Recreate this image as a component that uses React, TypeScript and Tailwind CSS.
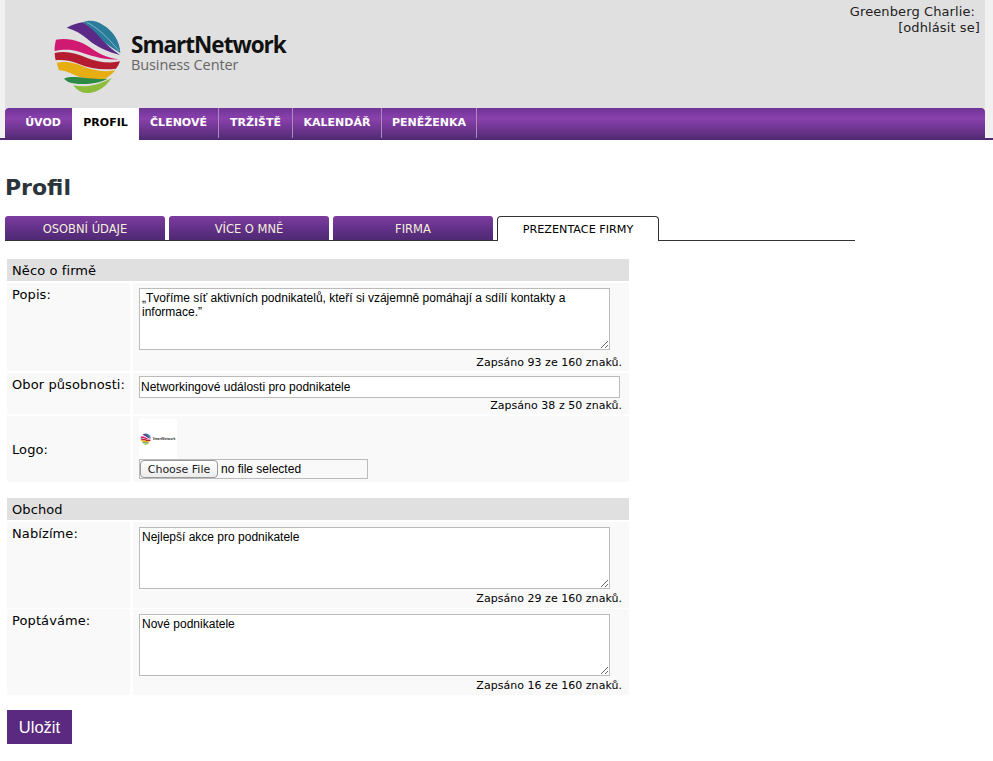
import React from "react";

function Globe({ size }: { size: number }) {
  return (
    <svg width={size} height={size} viewBox="30 20 234 234" className="shrink-0">
      <path d="M128 36C145 28 170 30 190 45C220 62 240 95 241 128C205 105 175 85 158 62C148 50 138 42 128 36Z" fill="#2b7b9b" />
      <path d="M140 36C175 52 205 85 238 122" stroke="#9fd8dc" strokeWidth="2" fill="none" />
      <path d="M80 52C95 44 112 38 128 36C150 48 170 70 190 92C205 108 222 122 240 134C205 125 170 110 145 88C125 70 103 58 80 52Z" fill="#5b2a86" />
      <path d="M48 88C90 80 130 95 160 118C190 138 215 145 240 147C190 150 150 135 120 125C90 115 65 118 44 122C43 112 45 100 48 88Z" fill="#d01a72" />
      <path d="M44 128C80 120 110 130 140 142C170 155 210 160 240 153C236 164 232 170 228 175C190 180 150 175 115 160C90 150 65 148 47 150C45 142 44 135 44 128Z" fill="#b51c30" />
      <path d="M50 157C85 150 110 160 140 172C170 182 200 185 226 180C216 192 205 200 195 205C160 212 130 205 105 195C85 185 70 180 57 180C54 172 52 165 50 157Z" fill="#e6ae12" />
      <path d="M72 205C105 192 140 210 203 205C175 222 115 226 85 215C80 212 76 209 72 205Z" fill="#2c8a45" />
      <path d="M100 225C130 232 170 228 215 202C195 235 165 248 140 248C125 248 110 240 100 225Z" fill="#8cbc3a" />
    </svg>
  );
}

function Counter({ children, className = "" }: { children: React.ReactNode; className?: string }) {
  return <div className={"text-right pr-[7px] text-[11px] leading-[13px] tracking-[0.03px] text-black " + className}>{children}</div>;
}

function Row({ label, h, center, children }: { label: string; h: string; center?: boolean; children: React.ReactNode }) {
  return (
    <div className={"flex gap-[3px] " + h}>
      <div className={"w-[123px] bg-[#f9f9f9] pl-[5px] text-[13px] leading-[16px] tracking-[0.1px] " + (center ? "flex items-center pt-[1px]" : "pt-[4px]")}>{label}</div>
      <div className="flex-1 bg-[#f9f9f9] pl-[6px]">{children}</div>
    </div>
  );
}

function Area({ value }: { value: string }) {
  return (
    <textarea
      defaultValue={value}
      className="block w-[471px] h-[62px] border border-[#bbbbbb] bg-white px-[2px] py-[2px] text-[12px] leading-[14px] text-black [font-family:'Liberation_Sans',Arial,sans-serif]"
    />
  );
}

function Heading({ children }: { children: React.ReactNode }) {
  return <div className="h-[22px] bg-[#e0e0e0] pl-[5px] text-[13px] leading-[23px] tracking-[0.1px]">{children}</div>;
}

const navItems = ["ÚVOD", "PROFIL", "ČLENOVÉ", "TRŽIŠTĚ", "KALENDÁŘ", "PENĚŽENKA"];
const tabs = ["OSOBNÍ ÚDAJE", "VÍCE O MNĚ", "FIRMA"];

export default function App() {
  return (
    <div className="min-h-[761px] bg-white text-black [font-family:'DejaVu_Sans',Verdana,sans-serif]">
      <header className="bg-[#f1f1f1] pl-[5px] pr-[8px] border-b-2 border-[#4f2a73] h-[140px]">
        <div className="relative h-[108px] bg-[#e0e0e0]">
          <div className="flex items-start pl-[45px] pt-[17px]">
            <Globe size={78} />
            <div className="ml-[3px] mt-[15px] [font-family:'Open_Sans',sans-serif]">
              <div className="text-[22.5px] leading-[26px] font-bold tracking-[-1px] text-[#111]">SmartNetwork</div>
              <div className="text-[14.5px] leading-[14px] tracking-[-0.1px] text-[#666]">Business Center</div>
            </div>
          </div>
          <div className="absolute right-[5px] top-[4px] text-right text-[13px] leading-[15.5px] tracking-[0.1px] text-[#222]">
            <span className="pr-[5px]">Greenberg Charlie:</span>
            <br />
            [odhlásit se]
          </div>
        </div>
        <nav className="flex h-[30px] rounded-t-[4px] bg-[linear-gradient(#6f3596,#8a40ac_35%,#7a3a9c_55%,#552c78)]">
          {navItems.map((item) =>
            item === "PROFIL" ? (
              <div key={item} className="flex h-[32px] w-[67px] items-center justify-center bg-white pb-[1px] text-[11px] font-bold text-black">
                {item}
              </div>
            ) : (
              <div
                key={item}
                className={
                  "flex items-center justify-center text-[11px] font-bold text-white " +
                  (item === "ÚVOD" ? "w-[67px] pl-[9px]" : "border-r border-[#a98bbd] " + (item === "ČLENOVÉ" ? "w-[80px]" : item === "TRŽIŠTĚ" ? "w-[74px]" : item === "KALENDÁŘ" ? "w-[89px]" : "w-[95px]"))
                }
              >
                {item}
              </div>
            )
          )}
        </nav>
      </header>

      <main className="pl-[5px]">
        <h1 className="pt-[34px] text-[22px] leading-[28px] font-bold text-[#2b343b]">Profil</h1>

        <div className="mt-[14px] flex h-[25px] w-[850px] items-end border-b border-[#333] gap-[4px]">
          {tabs.map((t) => (
            <div
              key={t}
              className="flex h-[24px] w-[160px] items-center justify-center rounded-t-[3px] bg-[linear-gradient(#7d3da0,#5f2f85_60%,#4f2a73)] pt-[3px] text-[11.5px] text-[#f5efdc]"
            >
              {t}
            </div>
          ))}
          <div className="-mb-px flex h-[25px] w-[162px] items-center justify-center rounded-t-[4px] border border-b-0 border-[#333] bg-white pt-[2px] text-[11.2px] text-black">
            PREZENTACE FIRMY
          </div>
        </div>

        <form className="ml-[2px] mt-[18px] w-[622px]">
          <Heading>Něco o firmě</Heading>
          <div className="mt-[2px] flex flex-col gap-[2px]">
            <Row label="Popis:" h="h-[88px]">
              <div className="pt-[5px]">
                <Area value="„Tvoříme síť aktivních podnikatelů, kteří si vzájemně pomáhají a sdílí kontakty a informace.”" />
                <Counter className="mt-[6px]">Zapsáno 93 ze 160 znaků.</Counter>
              </div>
            </Row>
            <Row label="Obor působnosti:" h="h-[41px]">
              <div className="pt-[3px]">
                <input
                  defaultValue="Networkingové události pro podnikatele"
                  className="block h-[22px] w-[481px] border border-[#bbbbbb] bg-white px-[1px] text-[12px] text-black [font-family:'Liberation_Sans',Arial,sans-serif]"
                />
                <Counter className="mt-[1px]">Zapsáno 38 z 50 znaků.</Counter>
              </div>
            </Row>
            <Row label="Logo:" h="h-[66px]" center>
              <div className="pt-[3px]">
                <div className="flex h-[40px] w-[38px] items-center gap-[1px] bg-white pl-[1px]">
                  <Globe size={12} />
                  <span className="text-[3px] leading-[3px] font-bold text-[#333] [font-family:'Open_Sans',sans-serif]">SmartNetwork</span>
                </div>
                <div className="flex h-[20px] w-[229px] items-center border border-[#bbbbbb] bg-[#f9f9f9] [font-family:'Liberation_Sans',Arial,sans-serif]">
                  <button type="button" className="h-[18px] w-[78px] rounded-[4px] border border-[#999] bg-[linear-gradient(#ffffff,#ececec)] text-[11px] leading-[15px] text-[#222] [font-family:'DejaVu_Sans',sans-serif]">
                    Choose File
                  </button>
                  <span className="ml-[3px] text-[12px] text-black">no file selected</span>
                </div>
              </div>
            </Row>
          </div>

          <div className="mt-[16px]">
            <Heading>Obchod</Heading>
          </div>
          <div className="mt-[2px] flex flex-col gap-[1px]">
            <Row label="Nabízíme:" h="h-[86px]">
              <div className="pt-[5px]">
                <Area value="Nejlepší akce pro podnikatele" />
                <Counter className="mt-[3px]">Zapsáno 29 ze 160 znaků.</Counter>
              </div>
            </Row>
            <Row label="Poptáváme:" h="h-[86px]">
              <div className="pt-[5px]">
                <Area value="Nové podnikatele" />
                <Counter className="mt-[3px]">Zapsáno 16 ze 160 znaků.</Counter>
              </div>
            </Row>
          </div>
          <button type="button" className="mt-[15px] block h-[34px] w-[65px] bg-[#592a80] pt-[1px] text-[16.5px] text-white [font-family:'Liberation_Sans',Arial,sans-serif]">
            Uložit
          </button>
        </form>
      </main>
    </div>
  );
}
